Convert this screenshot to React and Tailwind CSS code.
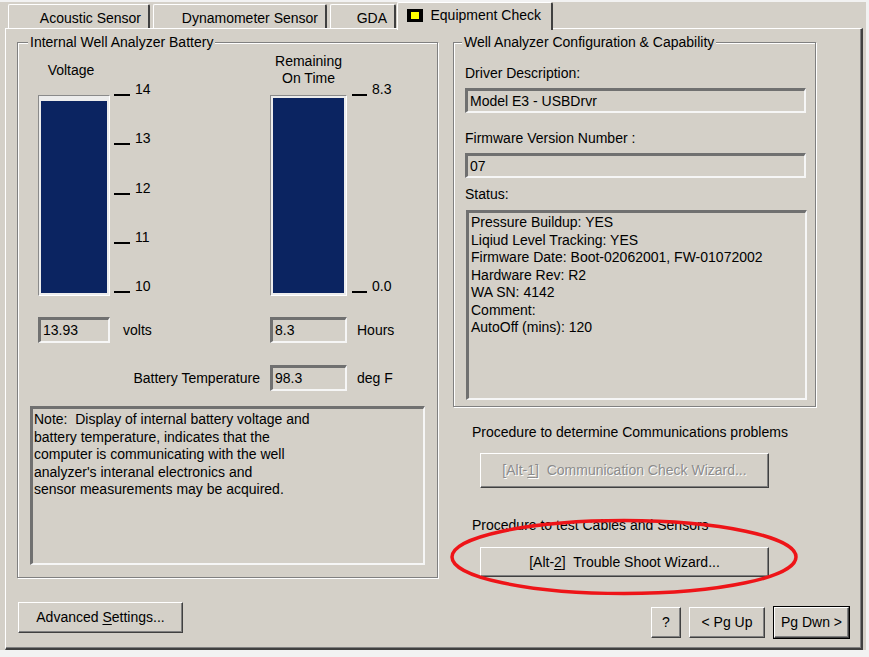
import React from 'react';

const raised =
  'border border-t-white border-l-white border-r-[#404040] border-b-[#404040] shadow-[inset_-1px_-1px_0_#808080] bg-[#d4d0c8] flex items-center justify-center';
const sunken =
  'border-t-[3px] border-l-[3px] border-r-2 border-b-2 border-t-[#707070] border-l-[#707070] border-r-[#f6f6f6] border-b-[#f6f6f6]';
const etched = 'relative border border-[#808080] shadow-[1px_1px_0_#fff,inset_1px_1px_0_#fff]';

function Tick({ label, line = 16 }) {
  return (
    <div className="leading-[17px] whitespace-nowrap">
      <span
        className="inline-block h-[2px] bg-black align-baseline translate-y-[2px] mr-[5px]"
        style={{ width: line }}
      />
      {label}
    </div>
  );
}

function Meter({ value, min, max, width }) {
  const pct = Math.max(0, Math.min(1, (value - min) / (max - min))) * 100;
  return (
    <div
      className="h-[201px] border border-t-[#8a8a8a] border-l-[#8a8a8a] border-r-white border-b-white bg-[#ececec] p-[2px] flex flex-col justify-end"
      style={{ width }}
    >
      <div className="w-full bg-[#0b2461]" style={{ height: pct + '%' }} />
    </div>
  );
}

function Field({ className, children }) {
  return (
    <div className={`${sunken} ${className} flex items-center pl-[2px] leading-[17px]`}>
      {children}
    </div>
  );
}

function Tab({ label, width, selected, icon }) {
  if (selected) {
    return (
      <div
        className="relative z-10 h-[28px] -mb-[2px] bg-[#d4d0c8] border-t border-l border-white border-r-2 border-r-[#404040] rounded-t-[2px] flex items-start justify-end pr-[10px] pt-[4px] gap-[7px] leading-[17px]"
        style={{ width }}
      >
        {icon}
        <span>{label}</span>
      </div>
    );
  }
  return (
    <div
      className="h-[24px] bg-[#d4d0c8] border-t border-l border-white border-r-2 border-r-[#404040] rounded-t-[2px] flex items-center justify-end pr-[7px] pt-[4px] leading-[17px]"
      style={{ width }}
    >
      {label}
    </div>
  );
}

export default function App() {
  return (
    <div className="relative w-[869px] h-[657px] overflow-hidden bg-[#f2f2f2] text-black text-[14px] font-['Liberation_Sans',Arial,sans-serif]">
      <div className="w-[866px] h-[648px] mt-[2px] bg-[#d4d0c8] pl-[5px]">
        {/* tabs */}
        <div className="flex items-end h-[26px] pl-[3px]">
          <Tab label="Acoustic Sensor" width={142} />
          <div className="w-[3px]" />
          <Tab label="Dynamometer Sensor" width={174} />
          <div className="w-[3px]" />
          <Tab label="GDA" width={66} />
          <div className="w-[1px]" />
          <Tab
            label="Equipment Check"
            width={156}
            selected
            icon={
              <span className="mt-[2px] w-[16px] h-[13px] bg-black flex items-center justify-center">
                <span className="w-[8px] h-[7px] bg-[#ffff00]" />
              </span>
            }
          />
        </div>

        {/* panel */}
        <div className="w-[858px] h-[622px] border-t border-l border-white border-r-2 border-b-2 border-r-[#404040] border-b-[#404040] shadow-[inset_-1px_-1px_0_#808080] flex pl-[11px] pt-[13px]">
          {/* left column */}
          <div className="flex flex-col">
            <div className={`${etched} w-[421px] h-[536px]`}>
              <span className="absolute -top-[9px] left-[10px] px-[2px] bg-[#d4d0c8] leading-[17px]">
                Internal Well Analyzer Battery
              </span>

              <div className="flex items-start pl-[20px]">
                <div className="w-[72px] flex flex-col items-center pt-[19px]">
                  <div className="leading-[17px] -ml-[6px]">Voltage</div>
                  <div className="mt-[16px]">
                    <Meter value={13.93} min={10} max={14} width={72} />
                  </div>
                </div>
                <div className="ml-[4px] mt-[38px] h-[214px] w-[156px] flex flex-col justify-between">
                  <Tick label="14" />
                  <Tick label="13" />
                  <Tick label="12" />
                  <Tick label="11" />
                  <Tick label="10" />
                </div>
                <div className="w-[77px] flex flex-col items-center pt-[10px]">
                  <div className="leading-[17px] text-center whitespace-nowrap">
                    Remaining
                    <br />
                    On Time
                  </div>
                  <div className="mt-[8px]">
                    <Meter value={8.3} min={0} max={8.3} width={77} />
                  </div>
                </div>
                <div className="ml-[5px] mt-[38px] h-[214px] flex flex-col justify-between">
                  <Tick label="8.3" line={15} />
                  <Tick label="0.0" line={15} />
                </div>
              </div>

              <div className="flex items-center mt-[21px] pl-[20px]">
                <div className="w-[232px] flex items-center">
                  <Field className="w-[72px] h-[26px]">13.93</Field>
                  <span className="ml-[13px]">volts</span>
                </div>
                <Field className="w-[77px] h-[26px]">8.3</Field>
                <span className="ml-[10px]">Hours</span>
              </div>

              <div className="flex items-center mt-[22px] pl-[20px]">
                <div className="w-[232px] flex justify-end pr-[10px]">Battery Temperature</div>
                <Field className="w-[77px] h-[26px]">98.3</Field>
                <span className="ml-[10px]">deg F</span>
              </div>

              <div className={`${sunken} ml-[12px] mt-[15px] w-[395px] h-[159px] pl-[1px] pt-[2px] leading-[17.5px]`}>
                Note:&nbsp; Display of internal battery voltage and
                <br />
                battery temperature, indicates that the
                <br />
                computer is communicating with the well
                <br />
                analyzer&apos;s interanal electronics and
                <br />
                sensor measurements may be acquired.
              </div>
            </div>

            <button className={`${raised} mt-[24px] ml-[1px] w-[165px] h-[31px] leading-[17px]`}>
              <span>
                Advanced <span className="underline underline-offset-2">S</span>ettings...
              </span>
            </button>
          </div>

          {/* right column */}
          <div className="ml-[15px] w-[397px] flex flex-col">
            <div className={`${etched} w-[363px] h-[365px] pl-[11px] pt-[22px]`}>
              <span className="absolute -top-[9px] left-[8px] px-[2px] bg-[#d4d0c8] leading-[17px] whitespace-nowrap">
                Well Analyzer Configuration &amp; Capability
              </span>
              <div className="leading-[17px]">Driver Description:</div>
              <Field className="mt-[6px] w-[341px] h-[25px]">Model E3 - USBDrvr</Field>
              <div className="mt-[17px] leading-[17px]">Firmware Version Number :</div>
              <Field className="mt-[6px] w-[341px] h-[25px]">07</Field>
              <div className="mt-[8px] leading-[17px]">Status:</div>
              <div className={`${sunken} mt-[7px] ml-[1px] w-[341px] h-[190px] pl-[2px] pt-[1px] leading-[17.5px]`}>
                <div>Pressure Buildup: YES</div>
                <div>Liqiud Level Tracking: YES</div>
                <div>Firmware Date: Boot-02062001, FW-01072002</div>
                <div>Hardware Rev: R2</div>
                <div>WA SN: 4142</div>
                <div>Comment:</div>
                <div>AutoOff (mins): 120</div>
              </div>
            </div>

            <div className="mt-[17px] pl-[19px] leading-[17px]">Procedure to determine Communications problems</div>
            <button
              className={`${raised} mt-[12px] ml-[27px] w-[289px] h-[35px] leading-[17px] whitespace-pre text-[#8c8c8c] [text-shadow:1px_1px_0_#fff]`}
            >
              <span>
                [Alt-<span className="underline underline-offset-2">1</span>]  Communication Check Wizard...
              </span>
            </button>

            <div className="mt-[29px] pl-[19px] leading-[17px]">Procedure to test Cables and Sensors</div>
            <button className={`${raised} mt-[13px] ml-[27px] w-[289px] h-[30px] leading-[17px] whitespace-pre`}>
              <span>
                [Alt-<span className="underline underline-offset-2">2</span>]  Trouble Shoot Wizard...
              </span>
            </button>

            <div className="mt-[29px] flex justify-end items-start gap-[8px]">
              <button className={`${raised} mt-[1px] w-[30px] h-[31px]`}>?</button>
              <button className={`${raised} mt-[1px] w-[76px] h-[31px] whitespace-pre`}>{'< Pg Up'}</button>
              <div className="w-[77px] h-[33px] border border-black">
                <button className={`${raised} w-full h-full whitespace-pre`}>{'Pg Dwn >'}</button>
              </div>
            </div>
          </div>
        </div>
      </div>

      {/* red annotation ellipse */}
      <svg className="absolute left-[449px] top-[518px] pointer-events-none" width="352" height="80" viewBox="0 0 352 80">
        <ellipse cx="175" cy="39" rx="172" ry="36.5" fill="none" stroke="#ee1418" strokeWidth="3.5" />
      </svg>
    </div>
  );
}
